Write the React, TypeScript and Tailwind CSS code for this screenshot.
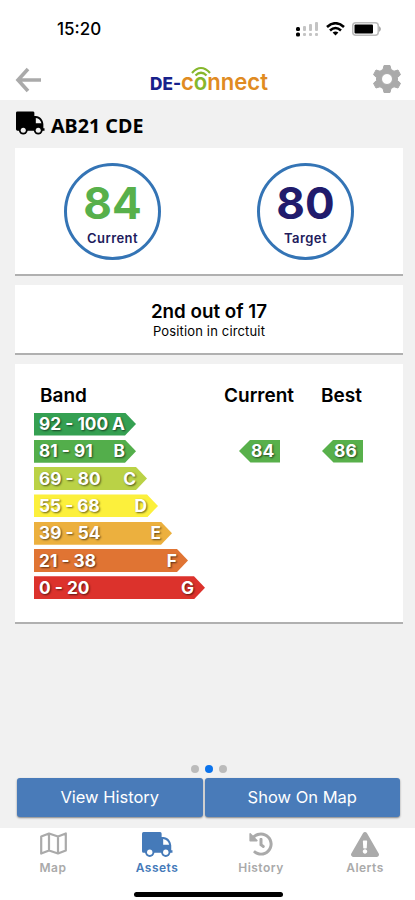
import { FaHistory, FaExclamationTriangle } from "react-icons/fa"

const bands = [
  { range: "92 - 100", letter: "A", width: "w-[102px]", color: "bg-[#35a052]" },
  { range: "81 - 91", letter: "B", width: "w-[102px]", color: "bg-[#53ae4b]" },
  { range: "69 - 80", letter: "C", width: "w-[113px]", color: "bg-[#bad246]" },
  { range: "55 - 68", letter: "D", width: "w-[124px]", color: "bg-[#fcf03c]" },
  { range: "39 - 54", letter: "E", width: "w-[138px]", color: "bg-[#ecb03e]" },
  { range: "21 - 38", letter: "F", width: "w-[154px]", color: "bg-[#e07433]" },
  { range: "0 - 20", letter: "G", width: "w-[171px]", color: "bg-[#dc322c]" },
]

const bandText = "text-white [text-shadow:1px_1px_2px_rgba(0,0,0,0.6)]"

function TruckIcon({ className, wheelFill }: { className?: string; wheelFill: string }) {
  return (
    <svg viewBox="0 0 30 24" className={className} fill="currentColor">
      <path
        fillRule="evenodd"
        d="M1.500 0H17.500Q19 0 19 1.500V4.700H20.500C25 4.700 28 8.700 28.300 13V17.500H29.500V20H1.500Q0 20 0 18.500V1.500Q0 0 1.500 0ZM20.500 6.700V12.300H26.300C25.800 9.300 23.800 7.100 20.500 6.700Z"
      />
      <circle cx="7.500" cy="19.500" r="4.500" />
      <circle cx="7.500" cy="19.500" r="2.600" fill={wheelFill} />
      <circle cx="23" cy="19.500" r="4.500" />
      <circle cx="23" cy="19.500" r="2.600" fill={wheelFill} />
    </svg>
  )
}

function MapIcon() {
  return (
    <svg viewBox="0 0 27 23" className="h-[23px] w-[27px]" fill="none" stroke="currentColor" strokeWidth="2.200" strokeLinejoin="round">
      <path d="M1.200 4.500 9 1.500 18 4.500 25.800 1.500V18.500L18 21.500 9 18.500 1.200 21.500ZM9 1.500V18.500M18 4.500V21.500" />
    </svg>
  )
}

function StatusBar() {
  return (
    <div className="flex h-[58px] items-center justify-between pl-[57px] pr-[33px]">
      <span className="text-[17px] font-medium leading-5">15:20</span>
      <div className="flex items-center gap-[7.500px]">
        <svg viewBox="0 0 22 15" className="h-[15px] w-[22px]">
          <g fill="#c4c4c4">
            <rect x="7" y="4" width="3" height="5" rx="1" />
            <rect x="13" y="2" width="3" height="7" rx="1" />
            <rect x="19" y="0" width="3" height="9" rx="1" />
            <rect x="7" y="11" width="3" height="3" rx="1" />
            <rect x="13" y="11" width="3" height="3" rx="1" />
            <rect x="19" y="11" width="3" height="3" rx="1" />
          </g>
          <rect x="0" y="5" width="4" height="4" rx="1.500" />
          <rect x="0" y="10.500" width="4" height="4" rx="1.500" />
        </svg>
        <svg viewBox="0 0 19 14" className="h-[14px] w-[19px]" fill="none" stroke="#000" strokeWidth="2.600">
          <path d="M1 5Q9.500-2.500 18 5M4 8.500Q9.500 3.500 15 8.500" />
          <path d="M9.500 13.500 6.600 10.600Q9.500 8.400 12.400 10.600Z" fill="#000" stroke="none" />
        </svg>
        <svg viewBox="0 0 30 14" className="h-[14px] w-[30px]">
          <rect x="0.750" y="0.750" width="25.500" height="12.500" rx="3" fill="none" stroke="#bbb" strokeWidth="1.500" />
          <rect x="2.500" y="2.500" width="18.500" height="9" rx="1" />
          <path d="M27 4Q31 7 27 10Z" fill="#aaa" />
        </svg>
      </div>
    </div>
  )
}

function Logo() {
  return (
    <svg viewBox="0 0 120 30" className="h-[30px] w-[120px] overflow-visible">
      <g fill="none" stroke="#86b72c" strokeWidth="2.200">
        <path d="M42 9Q51-1 60 9M45.500 11.500Q51 6 56.500 11.500" />
      </g>
      <text x="0" y="26" fontSize="17" fontWeight="800" fill="#17218b" textLength="31" lengthAdjust="spacingAndGlyphs">DE-</text>
      <text x="31" y="26" fontSize="23" fontWeight="600" fill="#e08b22" textLength="87" lengthAdjust="spacingAndGlyphs">
        c<tspan fill="#86b72c">o</tspan>nnect
      </text>
    </svg>
  )
}

function Header() {
  return (
    <header className="flex h-[42px] items-center justify-between px-[14px]">
      <svg viewBox="0 0 28 26" className="mt-px h-[26px] w-[28px]" fill="none" stroke="#aaa" strokeWidth="3.600">
        <path d="M14 2 4 13 14 24M3.500 13H27" />
      </svg>
      <div className="ml-[4px]"><Logo /></div>
      <svg viewBox="0 0 28 30" className="h-[30px] w-[28px]" fill="#aaa">
        <path fillRule="evenodd" strokeLinejoin="round" stroke="#aaa" strokeWidth="1" d="M11 1.500H17L18 5.500 21 7.200 25 6 27.500 10.700 24.500 13.500V16.500L27.500 19.300 25 24 21 22.800 18 24.500 17 28.500H11L10 24.500 7 22.800 3 24 0.500 19.300 3.500 16.500V13.500L0.500 10.700 3 6 7 7.200 10 5.500ZM14 9.500A5.500 5.500 0 1 0 14 20.500A5.500 5.500 0 1 0 14 9.500Z" />
      </svg>
    </header>
  )
}

function ScoreCircle({ value, label, color }: { value: string; label: string; color: string }) {
  return (
    <div className="flex h-[97px] w-[97px] flex-col items-center rounded-full border-[3px] border-[#3474b5] pt-[15px]">
      <span className={`text-[44px] font-bold leading-[45px] ${color}`}>{value}</span>
      <span className="mt-[4px] text-[13px] font-semibold leading-4 tracking-[0.450px] text-[#211b5c]">{label}</span>
    </div>
  )
}

function ScoreTag({ value }: { value: string }) {
  return (
    <div className={`flex h-[23px] w-[41px] items-center bg-[#58b04b] pl-[12px] text-[17.500px] font-bold [clip-path:polygon(28%_0,100%_0,100%_100%,28%_100%,0_50%)] ${bandText}`}>
      {value}
    </div>
  )
}

function BandCard() {
  return (
    <section className="h-[260px] border-b-2 border-[#b0b0b0] bg-white pl-[19px]">
      <div className="flex pt-[20px] text-[19px] font-semibold leading-[24px]">
        <span className="w-[184px] pl-[6px]">Band</span>
        <span className="w-[97px] pl-[6px]">Current</span>
        <span className="pl-[6px]">Best</span>
      </div>
      <div className="flex pt-[4.500px]">
        <div className="flex w-[205px] flex-col gap-[4.300px]">
          {bands.map((band) => (
            <div
              key={band.letter}
              className={`flex h-[23px] items-center justify-between pl-[5px] pr-[11px] text-[17.300px] font-bold [clip-path:polygon(0_0,calc(100%-11px)_0,100%_50%,calc(100%-11px)_100%,0_100%)] ${bandText} ${band.width} ${band.color}`}
            >
              <span>{band.range}</span>
              <span>{band.letter}</span>
            </div>
          ))}
        </div>
        <div className="flex gap-[42px] pt-[27px]">
          <ScoreTag value="84" />
          <ScoreTag value="86" />
        </div>
      </div>
    </section>
  )
}

function TabBar() {
  const tab = "flex w-[104px] flex-col items-center text-[12px] font-semibold leading-4 tracking-[0.500px]"
  return (
    <nav className="flex h-[58px] w-[417px] pl-px pt-[4px] text-[#aaa]">
      <div className={tab}>
        <div className="h-[28px]"><MapIcon /></div>
        Map
      </div>
      <div className={`${tab} text-[#457ab9]`}>
        <div className="h-[28px]"><TruckIcon className="h-[25px] w-[31px]" wheelFill="#fff" /></div>
        Assets
      </div>
      <div className={tab}>
        <div className="h-[28px]"><FaHistory className="h-[24px] w-[24px]" /></div>
        History
      </div>
      <div className={tab}>
        <div className="h-[28px]"><FaExclamationTriangle className="h-[25px] w-[28px]" /></div>
        Alerts
      </div>
    </nav>
  )
}

export default function App() {
  const button = "h-[39px] rounded-[3px] bg-[#497bb9] text-[16.500px] text-white shadow-[0_1px_2px_rgba(0,0,0,0.45)]"

  return (
    <div className="flex h-[900px] w-[415px] flex-col overflow-hidden bg-white font-['Inter',sans-serif] text-black">
      <StatusBar />
      <Header />

      <main className="flex h-[728px] flex-col bg-[#f1f1f1] px-[15px]">
        <h1 className="flex h-[48px] items-center gap-[6px] pl-px font-['Noto_Sans',sans-serif] text-[19.700px] font-bold">
          <TruckIcon className="mb-[3px] h-[24px] w-[29px]" wheelFill="#f1f1f1" />
          <span className="pt-[3px]">AB21 CDE</span>
        </h1>

        <div className="flex w-[388px] flex-col gap-[9px]">
          <section className="flex h-[128px] justify-between border-b-2 border-[#b0b0b0] bg-white px-[49px] pt-[15px]">
            <ScoreCircle value="84" label="Current" color="text-[#58b04b]" />
            <ScoreCircle value="80" label="Target" color="text-[#211b6c]" />
          </section>
          <section className="h-[70px] border-b-2 border-[#b0b0b0] bg-white pt-[16px] text-center">
            <p className="text-[18.800px] font-semibold leading-[22px]">2nd out of 17</p>
            <p className="text-[13px] leading-[17px] tracking-[0.150px]">Position in circtuit</p>
          </section>
          <BandCard />
        </div>

        <div className="mt-auto flex justify-center gap-[6px] pb-[5px] pl-[2px]">
          <span className="h-2 w-2 rounded-full bg-[#bbb]" />
          <span className="h-2 w-2 rounded-full bg-[#0b73ec]" />
          <span className="h-2 w-2 rounded-full bg-[#bbb]" />
        </div>
        <div className="mb-[11px] ml-[2px] flex gap-[2px]">
          <button className={`${button} w-[186px]`}>View History</button>
          <button className={`${button} w-[196px]`}>Show On Map</button>
        </div>
      </main>

      <TabBar />
      <div className="mx-auto mt-[6px] h-[5px] w-[149px] translate-x-px rounded-full bg-black" />
    </div>
  )
}
